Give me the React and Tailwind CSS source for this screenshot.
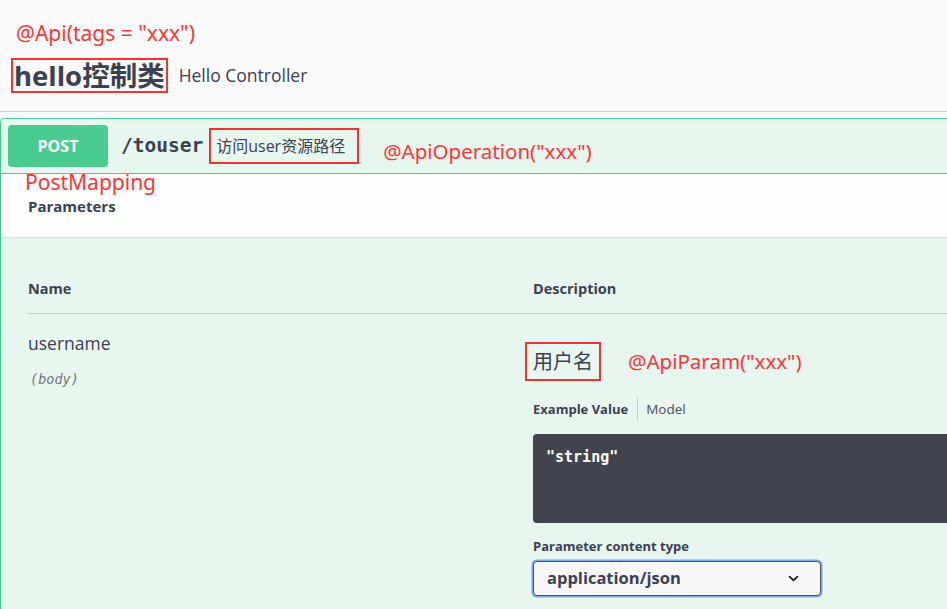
import React from "react";

const red = "text-[#ff3535]";

const ChevronDown = () => (
  <svg width="13" height="13" viewBox="0 0 20 20" fill="none">
    <path d="M4 7l6 6 6-6" stroke="#1b1b1b" strokeWidth="2.6" strokeLinecap="round" strokeLinejoin="round" />
  </svg>
);

const App = () => {
  return (
    <div className="w-[947px] h-[609px] overflow-hidden bg-[#fafafa] text-[#3b4151] font-['Open_Sans','Noto_Sans_CJK_SC',sans-serif]">
      {/* tag header */}
      <div className="pt-[19px] pb-[18px] border-b border-[#cfd1d4]">
        <div className={`pl-[16px] text-[21px] leading-[28px] font-['Noto_Sans','Noto_Sans_CJK_SC',sans-serif] ${red}`}>
          @Api(tags = "xxx")
        </div>
        <div className="flex items-center mt-[11px] pl-[11px]">
          <div className="h-[35px] border-2 border-[#ee3434] pl-[1px] pr-[1px] flex items-center">
            <span className="text-[27.5px] leading-[31px] font-bold text-[#3b4151]">hello控制类</span>
          </div>
          <span className="ml-[11px] text-[17.5px] text-[#3b4151]">Hello Controller</span>
        </div>
      </div>

      {/* operation block */}
      <div className="mt-[6px] w-[1200px] border border-[#49cc90] rounded-[4px] bg-[#e8f6f0] pb-[60px]">
        <div className="h-[55px] flex items-center px-[7px] border-b border-[#49cc90]">
          <div className="w-[100px] h-[42px] rounded-[4px] bg-[#49cc90] flex items-center justify-center text-white text-[16px] font-bold">
            POST
          </div>
          <span className="ml-[13px] font-['DejaVu_Sans_Mono',monospace] text-[19.5px] font-semibold text-[#3b4151]">/touser</span>
          <div className="ml-[6px] h-[36px] border-2 border-[#ee3434] pl-[5px] pr-[12px] flex items-center">
            <span className="text-[16px] text-[#3b4151]">访问user资源路径</span>
          </div>
          <span className={`ml-[24px] mt-[10px] text-[20.5px] font-['Noto_Sans','Noto_Sans_CJK_SC',sans-serif] ${red}`}>
            @ApiOperation("xxx")
          </span>
        </div>

        <div className="h-[63px] bg-[#fcfdfc] shadow-[0_1px_2px_rgba(0,0,0,0.1)] px-[24px] flex flex-col">
          <div className={`-mt-[4px] text-[21px] leading-[24px] font-['Noto_Sans','Noto_Sans_CJK_SC',sans-serif] ${red}`}>
            PostMapping
          </div>
          <div className="mt-[2px] pl-[3px] text-[15px] leading-[20px] font-bold">Parameters</div>
        </div>

        <div className="px-[26px] pt-[42px] w-[947px] box-content">
          <div className="grid grid-cols-[506px_1fr] pb-[14px] border-b border-[#c5cdc9]">
            <div className="pl-[1px] text-[14.5px] leading-[20px] font-bold">Name</div>
            <div className="text-[14.5px] leading-[20px] font-bold">Description</div>
          </div>

          <div className="grid grid-cols-[506px_1fr]">
            <div className="pt-[17px] pl-[1px]">
              <div className="text-[17.5px] leading-[24px]">username</div>
              <div className="mt-[15px] pl-[2px] font-['DejaVu_Sans_Mono',monospace] italic text-[13.5px] leading-[18px] text-[#74767b]">
                (body)
              </div>
            </div>

            <div className="pt-[28px]">
              <div className="flex items-center">
                <div className="-ml-[8px] h-[39px] border-2 border-[#ee3434] px-[6px] flex items-center">
                  <span className="text-[20px] leading-[35px] text-[#3b4151]">用户名</span>
                </div>
                <span className={`ml-[27px] text-[20.5px] font-['Noto_Sans','Noto_Sans_CJK_SC',sans-serif] ${red}`}>
                  @ApiParam("xxx")
                </span>
              </div>

              <div className="mt-[17px] flex items-center">
                <span className="text-[13px] leading-[18px] font-bold pr-[9px]">Example Value</span>
                <span className="h-[22px] border-l border-[#c9cccb]" />
                <span className="pl-[8px] text-[13.5px] leading-[18px] text-[#4a4f5c]">Model</span>
              </div>

              <div className="mt-[14px] h-[89px] rounded-[4px] bg-[#41444e] px-[13px] pt-[10px]">
                <span className="font-['DejaVu_Sans_Mono',monospace] font-bold text-[15px] leading-[18px] text-white">
                  "string"
                </span>
              </div>

              <div className="mt-[14px] text-[13px] leading-[18px] font-bold">Parameter content type</div>

              <div className="mt-[6px] w-[288px] h-[35px] rounded-[4px] border border-[#4d5260] shadow-[0_0_0_1.5px_#7ba8ea] bg-[#f7f7f7] flex items-center justify-between pl-[13px] pr-[20px]">
                <span className="text-[16.5px] font-bold text-[#3b4151]">application/json</span>
                <ChevronDown />
              </div>
            </div>
          </div>
        </div>
      </div>
    </div>
  );
};

export default App;
